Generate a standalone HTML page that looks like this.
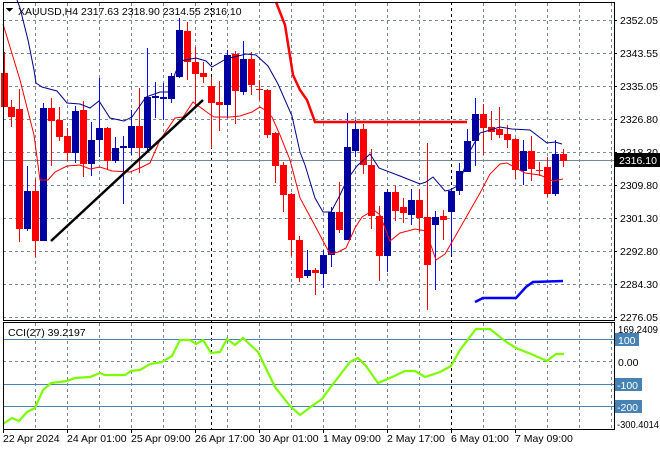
<!DOCTYPE html>
<html><head><meta charset="utf-8"><style>
html,body{margin:0;padding:0;background:#fff;width:660px;height:450px;overflow:hidden}
svg{display:block;font-family:"Liberation Sans",sans-serif;font-size:10.5px}
</style></head><body>
<svg id="s" width="660" height="450" viewBox="0 0 660 450" xmlns="http://www.w3.org/2000/svg" shape-rendering="crispEdges">
<g id="grid" stroke="#778899" stroke-dasharray="3,3" stroke-width="1"></g>
<line x1="211.5" y1="2" x2="211.5" y2="429" stroke="#000" stroke-dasharray="3,3"/>
<line x1="451.5" y1="2" x2="451.5" y2="429" stroke="#000" stroke-dasharray="3,3"/>
<line x1="3" y1="160.5" x2="614" y2="160.5" stroke="#778899"/>
<g stroke="#4682b4"><line x1="3" y1="339.5" x2="614" y2="339.5"/><line x1="3" y1="384.5" x2="614" y2="384.5"/><line x1="3" y1="406.5" x2="614" y2="406.5"/></g>
<g id="c"></g>
<g fill="none" shape-rendering="auto">
<polyline stroke="#00008b" stroke-width="1" points="17,0 20,8 28,40 34,70 36,83 42,87 57,91 67,103 80,104 90,108 99,101 110,118 124,121 132,117 146,97 160,92 168,92 180,61 196,58 206,61 212,67 226,59 246,54 256,55 268,66 278,84 292,116 300,152 305,165 315,198 323,212 331,212 340,195 347,180 357,166 370,154 379,168 400,176 420,184 426,182 433,177 445,191 450,190 459,185 470,151 480,133 500,127 512,129 530,130 547,143 555,142 562,144"/>
<polyline stroke="#ff0000" stroke-width="1" points="3,24 20,80 34,135 40,180 48,180 55,172 67,166 80,165 90,169 100,167 112,171 130,172 140,168 150,163 160,140 175,118 183,117 193,102 208,113 214,117 230,117 240,116 252,112 260,107 265,110 272,117 280,135 290,160 300,198 313,222 330,254 338,252 346,248 355,228 362,217 374,210 380,215 390,241 400,233 415,229 426,231 436,260 445,254 460,228 480,193 490,174 500,164 507,163 525,173 540,175 553,181 563,179"/>
<polyline stroke="#ff0000" stroke-width="2.5" points="276,2 285,25 293,75 300,90 307,100 315,122 467,122"/>
<line x1="51" y1="241" x2="203" y2="100" stroke="#000" stroke-width="2.5"/>
<polyline stroke="#0000ff" stroke-width="2.5" points="475,302 483,298 516,298 526,287 533,282 563,281"/>
<polyline stroke="#7cfc00" stroke-width="2.2" points="3,424 12,418 19,421 27,412 35,408 43,390 51,383 67,381 75,378 90,377 100,373 105,375 125,375 131,371 140,370 150,364 162,362 172,356 180,340 190,340 196,344 203,340 211,353 220,352 227,339 235,345 243,338 258,352 275,387 290,406 300,415 312,406 322,399 330,388 340,375 350,362 358,358 366,366 378,383 390,378 405,371 415,371 425,377 440,372 451,366 460,350 476,329 490,329 505,341 516,348 531,354 547,361 556,354 564,354"/>
</g>
<g fill="none" stroke="#000" stroke-width="1">
<rect x="3.5" y="2.5" width="611" height="318"/>
<rect x="3.5" y="322.5" width="611" height="107"/>
</g>
<polygon points="6,8 13,8 9.5,12" fill="#000"/>
<text x="18" y="15" fill="#000">XAUUSD,H4  2317.63 2318.90 2314.55 2316.10</text>
<text x="8" y="336" fill="#000">CCI(27) 39.2197</text>
<g id="ax" fill="#000"></g>
<rect x="615" y="153" width="45" height="14" fill="#000"/>
<text x="619" y="164" fill="#fff">2316.10</text>
<rect x="615" y="333" width="24" height="13" fill="#4682b4"/>
<text x="618" y="344" fill="#fff">100</text>
<rect x="615" y="378" width="27" height="13" fill="#4682b4"/>
<text x="617" y="389" fill="#fff">-100</text>
<rect x="615" y="400" width="27" height="13" fill="#4682b4"/>
<text x="617" y="411" fill="#fff">-200</text>
<text x="618" y="333" textLength="40" lengthAdjust="spacingAndGlyphs">169.2409</text>
<text x="618" y="366">0.00</text>
<text x="617" y="428" textLength="42" lengthAdjust="spacingAndGlyphs">-300.4014</text>
</svg>
<script>
var NS="http://www.w3.org/2000/svg";
function el(p,t,a,txt){var e=document.createElementNS(NS,t);for(var k in a)e.setAttribute(k,a[k]);if(txt)e.textContent=txt;p.appendChild(e);return e;}
var g=document.getElementById('grid');
for(var x=35;x<614;x+=32){if(x==211||x==451)continue;el(g,'line',{x1:x+.5,y1:3,x2:x+.5,y2:320});el(g,'line',{x1:x+.5,y1:323,x2:x+.5,y2:429});}
[20,53,86,119,152,185,218,251,284,317].forEach(function(y){el(g,'line',{x1:3,y1:y+.5,x2:614,y2:y+.5});});
el(g,'line',{x1:3,y1:361.5,x2:614,y2:361.5});
var ax=document.getElementById('ax');
var pl=["2352.05","2343.55","2335.05","2326.80","2318.30","2309.80","2301.30","2292.80","2284.30","2276.05"];
[20,53,86,119,152,185,218,251,284,317].forEach(function(y,i){el(ax,'line',{x1:614,y1:y+.5,x2:617,y2:y+.5,stroke:'#000'});el(ax,'text',{x:620,y:y+4},pl[i]);});
var tl=[[3,"22 Apr 2024"],[67,"24 Apr 01:00"],[131,"25 Apr 09:00"],[195,"26 Apr 17:00"],[259,"30 Apr 01:00"],[323,"1 May 09:00"],[387,"2 May 17:00"],[451,"6 May 01:00"],[515,"7 May 09:00"]];
tl.forEach(function(t){el(ax,'line',{x1:t[0]+.5,y1:429,x2:t[0]+.5,y2:433,stroke:'#000'});el(ax,'text',{x:t[0],y:442},t[1]);});
var C=[[73,107,52,107],[107,117,100,127],[109,229,89,242],[229,191,166,231],[191,241,179,257],[241,108,103,241],[108,121,98,166],[120,137,107,141],[136,153,128,161],[153,111,106,163],[110,164,101,177],[164,140,122,176],[140,128,78,157],[128,161,127,170],[161,148,137,163],[148,146,136,204],[148,126,110,155],[126,148,88,173],[148,97,48,150],[98,96,82,118],[99,97,83,120],[99,76,73,103],[77,30,18,78],[31,62,22,80],[62,74,47,106],[73,77,62,83],[86,103,77,148],[102,105,81,131],[105,55,50,118],[54,91,51,124],[92,59,41,95],[59,85,52,95],[89,90,80,100],[90,135,89,138],[133,166,132,183],[165,195,162,212],[194,240,193,256],[240,278,236,282],[276,270,250,278],[270,273,268,295],[274,255,250,288],[255,212,207,267],[212,230,182,233],[240,147,113,240],[151,129,120,157],[129,165,124,174],[165,216,149,229],[216,256,206,281],[256,192,189,272],[192,211,186,221],[207,213,198,223],[215,200,189,225],[200,218,189,232],[217,265,143,310],[225,217,211,290],[216,220,210,240],[212,191,190,255],[191,171,163,195],[172,141,129,172],[141,114,98,166],[114,128,104,155],[127,132,111,140],[129,135,107,138],[134,140,125,148],[139,170,138,179],[171,151,140,185],[151,169,136,181],[170,171,162,176],[167,194,157,197],[194,154,140,196],[154,161,149,167]];
var cg=document.getElementById('c');
C.forEach(function(c,i){var x=(i==0?4:3+8*i);var bull=c[1]<c[0];var col=bull?'#0000a0':'#ff0000';if(i==0)col='#ff0000';
el(cg,'rect',{x:x,y:c[2],width:1,height:Math.max(1,c[3]-c[2]),fill:bull?'#0000ff':'#ff0000'});
var t=Math.min(c[0],c[1]),b=Math.max(c[0],c[1]);el(cg,'rect',{x:x-3,y:t,width:7,height:Math.max(1,b-t),fill:col});});
</script>
</body></html>
